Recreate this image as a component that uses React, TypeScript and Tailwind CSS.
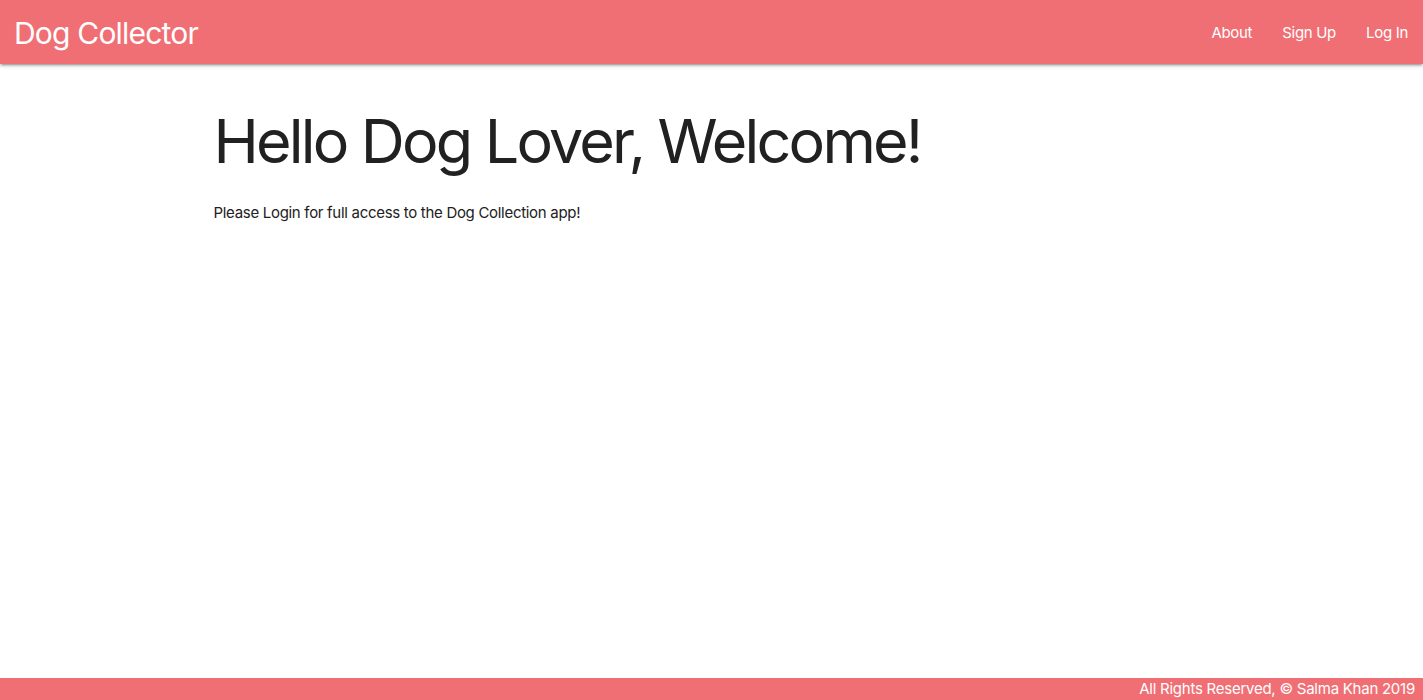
const App = () => {
  return (
    <div
      className="min-h-screen flex flex-col bg-white text-[15px] text-black/[0.87]"
      style={{ fontFamily: "Inter, 'Noto Sans', Arial, sans-serif" }}
    >
      <nav className="relative z-10 h-16 bg-[#f06f74] text-white shadow-[0_2px_2px_0_rgba(0,0,0,0.14),0_3px_1px_-2px_rgba(0,0,0,0.12),0_1px_5px_0_rgba(0,0,0,0.2)]">
        <div className="h-full flex items-center justify-between">
          <a href="#" className="pl-[14px] pt-[1px] text-[30px] leading-[64px] tracking-[-0.8px]">
            Dog Collector
          </a>
          <ul className="flex h-full pt-[1px]">
            <li>
              <a href="#" className="block px-[15px] leading-[64px] tracking-[-0.3px]">About</a>
            </li>
            <li>
              <a href="#" className="block px-[15px] leading-[64px] tracking-[-0.3px]">Sign Up</a>
            </li>
            <li>
              <a href="#" className="block px-[15px] leading-[64px] tracking-[-0.3px]">Log In</a>
            </li>
          </ul>
        </div>
      </nav>

      <main className="flex-1">
        <div className="w-[70%] mx-auto">
          <h1 className="mt-[44px] mb-[27px] text-[61px] leading-[1.1] tracking-[-2.8px] text-[#212121]">
            Hello Dog Lover, Welcome!
          </h1>
          <p className="text-[15px] leading-[1.5] tracking-[-0.3px] text-[#212121]">
            Please Login for full access to the Dog Collection app!
          </p>
        </div>
      </main>

      <footer className="h-[22px] bg-[#f06f74] text-white text-right pr-2 text-[15px] leading-[22px] tracking-[-0.25px]">
        All Rights Reserved, © Salma Khan 2019
      </footer>
    </div>
  );
};

export default App;
